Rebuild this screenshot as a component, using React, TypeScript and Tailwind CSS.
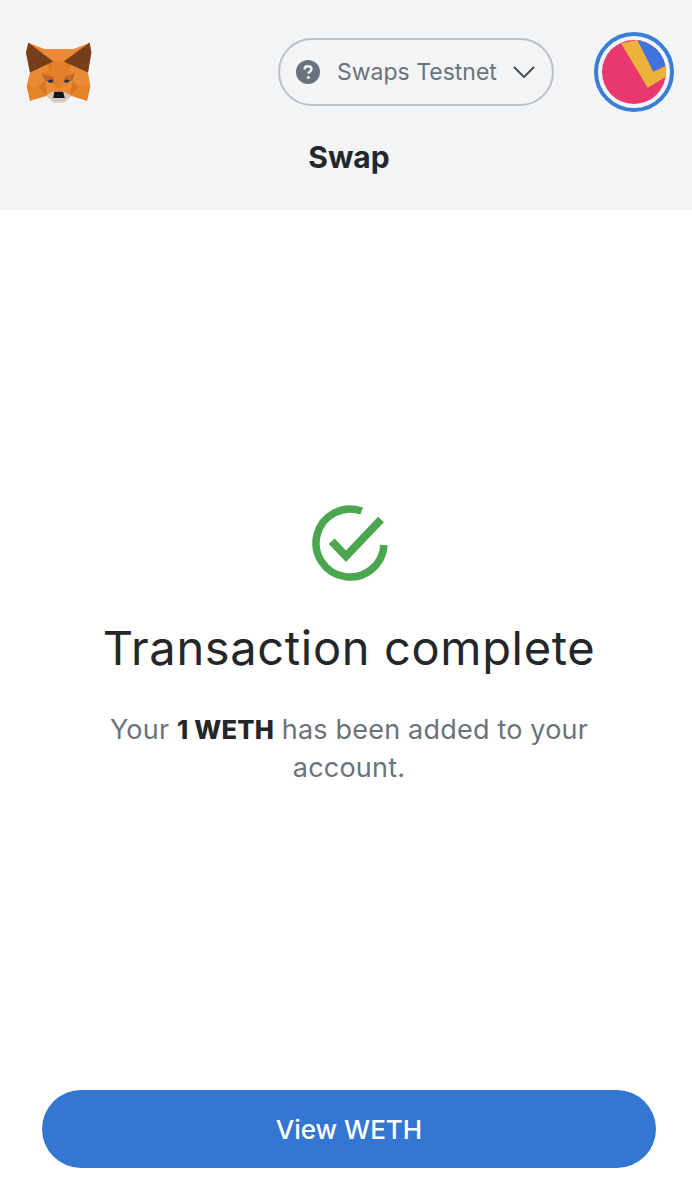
const FoxLogo = () => (
  <svg width="68" height="63" viewBox="75 60 205 190" aria-label="MetaMask">
    <polygon points="85,65 135,85 220,85 270,65 275,95 265,155 272,195 262,240 215,225 190,245 165,245 140,225 90,240 80,195 90,155 78,95" fill="#ea8a35" />
    <polygon points="85,65 160,122 150,150 125,90" fill="#e2761b" />
    <polygon points="270,65 192,122 205,150 230,90" fill="#e2761b" />
    <polygon points="135,85 220,85 192,122 160,122" fill="#ec8a3a" />
    <polygon points="160,122 192,122 205,150 225,158 195,168 185,200 168,200 160,168 125,158 150,150" fill="#e4802a" />
    <polygon points="125,158 160,168 165,190 135,180" fill="#c0682a" />
    <polygon points="225,158 195,168 190,190 218,180" fill="#c0682a" />
    <polygon points="85,65 160,122 90,155 78,95" fill="#763e1a" />
    <polygon points="270,65 192,122 265,155 275,95" fill="#763e1a" />
    <polygon points="80,195 115,198 140,225 90,240" fill="#e8832a" />
    <polygon points="272,195 238,198 215,225 262,240" fill="#e8832a" />
    <polygon points="115,198 135,180 142,225" fill="#d87520" />
    <polygon points="238,198 218,180 212,225" fill="#d87520" />
    <polygon points="138,225 160,212 192,212 215,225 195,245 160,245" fill="#d7c9bd" />
    <polygon points="163,213 190,213 195,232 160,232" fill="#161616" />
    <polygon points="142,178 158,176 160,184 148,186" fill="#233447" />
    <polygon points="193,184 196,176 210,178 204,186" fill="#233447" />
  </svg>
)

const NetworkPill = () => (
  <button className="flex h-[68px] w-[276px] items-center rounded-full border-2 border-[#bbc0c5] pl-[16px] text-[23px] text-[#6a737d]">
    <svg width="24" height="24" viewBox="0 0 24 24">
      <circle cx="12" cy="12" r="12" fill="#6a737d" />
      <path d="M8.6 9.4c0-2 1.5-3.2 3.5-3.2s3.4 1.2 3.4 2.9c0 2.6-3 2.6-3 4.6" fill="none" stroke="#f2f4f6" strokeWidth="2.4" />
      <circle cx="12.4" cy="17.5" r="1.6" fill="#f2f4f6" />
    </svg>
    <span className="ml-[17px] whitespace-nowrap">Swaps Testnet</span>
    <svg className="ml-[16px]" width="22" height="12" viewBox="0 0 22 12">
      <path d="M1 1l10 10L21 1" fill="none" stroke="#4a4f55" strokeWidth="2" />
    </svg>
  </button>
)

const AccountIcon = () => (
  <div className="flex h-[80px] w-[80px] items-center justify-center rounded-full border-4 border-[#3a7fd5]">
    <svg className="rounded-full" width="64" height="64" viewBox="0 0 64 64">
      <rect width="64" height="64" fill="#e8386f" />
      <polygon points="35.3,0 64,0 64,25.7 51.3,31.7" fill="#3f73dd" />
      <polygon points="19,3.3 35.3,0 51.3,31.7 64,25.7 64,36.7 45.7,47.7" fill="#ecb23c" />
    </svg>
  </div>
)

const CheckIcon = () => (
  <svg className="ml-[2px]" width="76" height="76" viewBox="0 0 76 76">
    <path d="M49.7 6.1A34 34 0 1 0 72 40" fill="none" stroke="#4ca650" strokeWidth="7.5" />
    <path d="M19.7 36.3L34 51.3L69 14.6" fill="none" stroke="#4ca650" strokeWidth="8" />
  </svg>
)

const App = () => {
  return (
    <div className="flex h-[1192px] w-[692px] flex-col bg-white font-['Inter',sans-serif]">
      <header className="h-[210px] bg-[#f2f4f6]">
        <div className="flex items-center justify-between pl-[25px] pr-[18px] pt-[32px]">
          <FoxLogo />
          <div className="flex items-center gap-[40px]">
            <NetworkPill />
            <AccountIcon />
          </div>
        </div>
        <h1 className="mt-[25px] pl-[6px] text-center text-[30px] font-bold leading-[40px] text-[#24272a]">Swap</h1>
      </header>
      <main className="flex flex-1 flex-col items-center pl-[6px] pt-[295px]">
        <CheckIcon />
        <h2 className="mt-[37px] whitespace-nowrap text-[47px] leading-[60px] tracking-[0.65px] text-[#24272a]">Transaction complete</h2>
        <p className="mt-[33px] w-[520px] text-center text-[27px] leading-[38px] tracking-[0.2px] text-[#6a737d]">
          Your <b className="text-[25.5px] font-extrabold text-[#24272a]">1 WETH</b> has been added to your account.
        </p>
      </main>
      <footer className="pb-[24px] pl-[42px] pr-[36px]">
        <button className="h-[78px] w-full rounded-full bg-[#3377d3] text-[26px] font-medium text-white">View WETH</button>
      </footer>
    </div>
  )
}

export default App
